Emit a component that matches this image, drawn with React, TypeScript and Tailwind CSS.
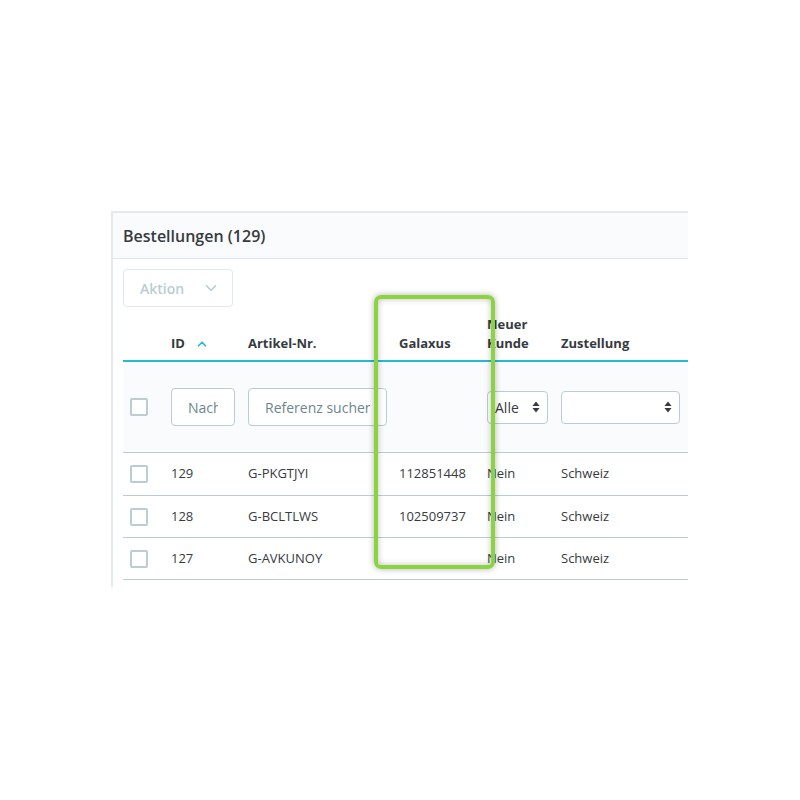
import { ChevronDown, ChevronUp } from 'lucide-react';

type Order = {
  id: number;
  reference: string;
  galaxus: string;
  newCustomer: string;
  delivery: string;
};

const orders: Order[] = [
  { id: 129, reference: 'G-PKGTJYI', galaxus: '112851448', newCustomer: 'Nein', delivery: 'Schweiz' },
  { id: 128, reference: 'G-BCLTLWS', galaxus: '102509737', newCustomer: 'Nein', delivery: 'Schweiz' },
  { id: 127, reference: 'G-AVKUNOY', galaxus: '', newCustomer: 'Nein', delivery: 'Schweiz' },
];

// column widths: checkbox, id, reference, galaxus, new customer, delivery
const cols = 'grid grid-cols-[40px_77px_151px_88px_74px_1fr]';

function Checkbox() {
  return <div className="w-[18px] h-[18px] border-2 border-[#bbcdd2] rounded-[2px] bg-white" />;
}

function SortArrows() {
  return (
    <svg width="8" height="12" viewBox="0 0 8 12" className="shrink-0">
      <path d="M4 0.5 L7.5 5 L0.5 5 Z" fill="#363a41" />
      <path d="M4 11.5 L7.5 7 L0.5 7 Z" fill="#363a41" />
    </svg>
  );
}

function FakeSelect({ value, width }: { value?: string; width: string }) {
  return (
    <div
      className={`${width} h-[33px] flex items-center justify-between border border-[#bbcdd2] rounded bg-white pl-[7px] pr-[7px] text-[14px] text-[#363a41]`}
    >
      <span>{value}</span>
      <SortArrows />
    </div>
  );
}

export default function App() {
  return (
    <div className="w-[800px] h-[800px] bg-white relative" style={{ fontFamily: '"Open Sans", "Noto Sans", sans-serif' }}>
      <div className="pt-[211px] pl-[111px]">
        <div className="w-[577px] h-[376px] overflow-hidden border-l-2 border-t-2 border-[#e4e9ec] bg-white">
          <div className="h-[46px] flex items-center px-[10px] bg-[#fafbfc] border-b border-[#dfe5e8]">
            <span className="text-[16px] font-semibold text-[#363a41]">Bestellungen (129)</span>
          </div>

          <div className="pl-[10px]">
            <div className="mt-[10px] w-[110px] h-[38px] border border-[#e1e7ea] rounded flex items-center pl-4 pr-3 justify-between">
              <span className="text-[14px] font-semibold text-[#b9cdd2]">Aktion</span>
              <ChevronDown size={18} strokeWidth={2.25} className="text-[#b9cdd2]" />
            </div>

            <div className="w-[600px]">
              {/* column headings */}
              <div className={`${cols} pt-2 pb-[7px] border-b-2 border-[#25b9d7] text-[13px] leading-[19px] font-bold text-[#363a41]`}>
                <div />
                <div className="pl-2 self-end flex items-center gap-[10px]">
                  ID
                  <ChevronUp size={14} strokeWidth={3} className="text-[#25b9d7]" />
                </div>
                <div className="pl-2 self-end">Artikel-Nr.</div>
                <div className="pl-2 self-end">Galaxus</div>
                <div className="pl-2 self-end">
                  Neuer
                  <br />
                  Kunde
                </div>
                <div className="pl-2 self-end">Zustellung</div>
              </div>

              {/* filter row */}
              <div className={`${cols} h-[91px] items-center bg-[#fafbfc] border-b border-[#bbcdd2]`}>
                <div className="pl-[7px]">
                  <Checkbox />
                </div>
                <div className="pl-2">
                  <input
                    placeholder="Nachname"
                    className="w-[64px] h-[38px] px-4 border border-[#bbcdd2] rounded bg-white text-[14px] placeholder:text-[#6c868e] outline-none"
                  />
                </div>
                <div className="pl-2">
                  <input
                    placeholder="Referenz suchen"
                    className="w-[139px] h-[38px] px-4 border border-[#bbcdd2] rounded bg-white text-[14px] placeholder:text-[#6c868e] outline-none"
                  />
                </div>
                <div />
                <div className="pl-2">
                  <FakeSelect value="Alle" width="w-[61px]" />
                </div>
                <div className="pl-2">
                  <FakeSelect width="w-[119px]" />
                </div>
              </div>

              {orders.map((o, i) => (
                <div
                  key={o.id}
                  className={`${cols} ${i === 0 ? 'h-[43px]' : 'h-[42px]'} items-center border-b border-[#bbcdd2] text-[13px] text-[#363a41]`}
                >
                  <div className="pl-[7px]">
                    <Checkbox />
                  </div>
                  <div className="pl-2">{o.id}</div>
                  <div className="pl-2">{o.reference}</div>
                  <div className="pl-2">{o.galaxus}</div>
                  <div className="pl-2">{o.newCustomer}</div>
                  <div className="pl-2">{o.delivery}</div>
                </div>
              ))}
            </div>
          </div>
        </div>
      </div>

      {/* highlight frame around the Galaxus column */}
      <div className="absolute left-[374px] top-[295px] w-[121px] h-[274px] border-4 border-[#8cd43f] rounded-[7px] shadow-[0_0_6px_rgba(0,0,0,0.3),inset_0_0_6px_rgba(0,0,0,0.25)]" />
    </div>
  );
}
